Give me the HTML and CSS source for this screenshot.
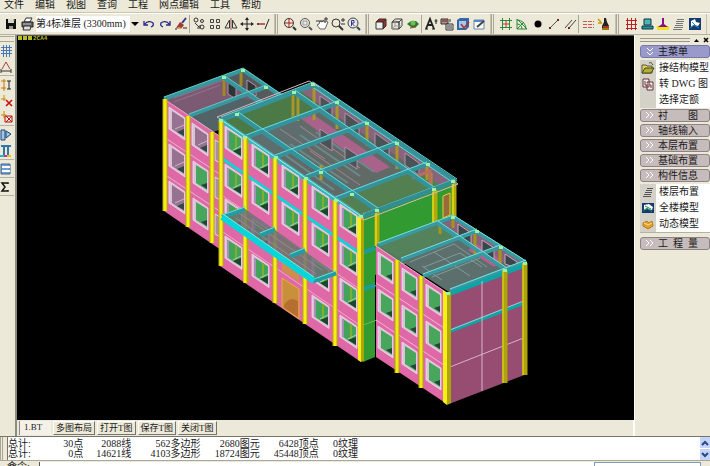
FILE: index.html
```html
<!DOCTYPE html>
<html lang="zh-CN">
<head>
<meta charset="utf-8">
<title>1.BT</title>
<link rel="stylesheet" href="styles.css">
</head>
<body>
<nav class="menubar">
  <a href="#">文件</a><a href="#">编辑</a><a href="#">视图</a><a href="#">查询</a><a href="#">工程</a><a href="#">网点编辑</a><a href="#">工具</a><a href="#">帮助</a>
</nav>

<div class="toolbar">
  <div class="group">
    <button class="tool"><svg viewBox="0 0 16 16"><path d="M3 3h10v10H3z" fill="#111"/><path d="M5 3h6v4H5z" fill="#d8d8c8"/><path d="M6 10h4v3H6z" fill="#999"/><path d="M11 3v2" stroke="#6a6"/></svg></button>
    <button class="tool"><svg viewBox="0 0 16 16"><path d="M5 6l2-4h6l-2 4z" fill="#fff" stroke="#333"/><path d="M3 6h11v5H3z" fill="#666" stroke="#222"/><path d="M5 10h7l-1 4H4z" fill="#ddd" stroke="#333"/><path d="M4 8h8" stroke="#bbb"/></svg></button>
    <div class="floor">
      <select class="floor-select" aria-label="标准层"><option>第4标准层 (3300mm)</option></select>
      <svg class="floor-arrow" viewBox="0 0 8 6"><path d="M0 1h8L4 5z" fill="#000"/></svg>
    </div>
    <button class="tool"><svg viewBox="0 0 16 16"><path d="M3 5v4h4M4 8c2-3 6-3 8-1 1 2 0 3-2 4" fill="none" stroke="#23238c" stroke-width="1.3"/></svg></button>
    <button class="tool"><svg viewBox="0 0 16 16"><path d="M13 5v4H9M12 8c-2-3-6-3-8-1-1 2 0 3 2 4" fill="none" stroke="#23238c" stroke-width="1.3"/></svg></button>
    <button class="tool"><svg viewBox="0 0 16 16"><path d="M13 2l-4 5" stroke="#338" stroke-width="2"/><path d="M7 6l4 3-3 4-5-1z" fill="#a23a3a"/><path d="M4 11l5 1-2 1z" fill="#e8d060"/><path d="M2 13h2M10 12h4" stroke="#222"/></svg></button>
    <span class="sep"></span>
    <button class="tool"><svg viewBox="0 0 16 16" fill="none" stroke="#333"><circle cx="5" cy="4" r="2"/><circle cx="11" cy="5" r="1.5"/><circle cx="11" cy="11" r="2"/><path d="M4 7l4 4M6 12h3v-3"/></svg></button>
    <button class="tool"><svg viewBox="0 0 16 16" fill="none" stroke="#444"><path d="M3.500 3.500h3v3h-3zM9.500 3.500h3v3h-3zM3.500 9.500h3v3h-3zM9.500 9.500h3v3h-3z"/></svg></button>
    <button class="tool"><svg viewBox="0 0 16 16" fill="none" stroke="#333"><path d="M6.500 4v8H2zM9.500 4v8H14z"/><path d="M8 2v12" stroke="#955"/></svg></button>
    <button class="tool"><svg viewBox="0 0 16 16"><path d="M8 3v10M3 8h10" stroke="#222"/><path d="M8 1l2 3H6zM8 15l2-3H6zM1 8l3-2v4zM15 8l-3-2v4z" fill="#222"/></svg></button>
    <button class="tool"><svg viewBox="0 0 16 16"><path d="M2 8h8" stroke="#a33" stroke-width="1.500"/><path d="M10 13l4-10M2 8h2" stroke="#222" fill="none"/></svg></button>
  </div>
  <div class="group">
    <button class="tool"><svg viewBox="0 0 16 16" fill="none" stroke="#333"><circle cx="7" cy="7" r="4.500"/><path d="M11 11l3 3" stroke-width="2"/><path d="M7 2v10M2 7h10" stroke="#a22"/></svg></button>
    <button class="tool"><svg viewBox="0 0 16 16" fill="none" stroke="#555"><circle cx="7" cy="7" r="4.500"/><path d="M11 11l3 3" stroke-width="2"/><path d="M5 5h4v4H5z" stroke="#99a"/></svg></button>
    <button class="tool"><svg viewBox="0 0 16 16"><path d="M3 9l3 4h5l3-7-2-1-1 2-1-3-2 2-2-1-1 3z" fill="#fff" stroke="#666"/><path d="M2 5h8M10 3h4M12 1v4" stroke="#333"/></svg></button>
    <button class="tool"><svg viewBox="0 0 16 16" fill="none" stroke="#333"><circle cx="6" cy="7" r="4"/><path d="M9 10l4 4" stroke-width="2"/><path d="M11 4h4M13 2v4M11 8h4"/></svg></button>
    <button class="tool"><svg viewBox="0 0 16 16" fill="none" stroke="#345"><circle cx="7" cy="7" r="5"/><path d="M11 11l3 3" stroke-width="2"/><path d="M5.500 10V4.500h2.500v2.500h-2.500l3 3" stroke="#33a"/></svg></button>
  </div>
  <div class="group">
    <button class="tool"><svg viewBox="0 0 16 16" stroke="#333"><path d="M3 6l3-3h7l-3 3z" fill="#a22"/><path d="M10 6l3-3v7l-3 3z" fill="#933"/><path d="M3 6h7v7H3z" fill="#eee"/></svg></button>
    <button class="tool"><svg viewBox="0 0 16 16" stroke="#444" fill="none"><path d="M3 6l3-3h7l-3 3zM10 6l3-3v7l-3 3zM3 6h7v7H3z"/><path d="M6 3v7H13M6 10l-3 3" stroke="#999"/></svg></button>
    <button class="tool"><svg viewBox="0 0 16 16"><path d="M2 8l4-3h5l3 3-3 3H6z" fill="#2b7a2b"/><circle cx="8" cy="7" r="2.500" fill="#6fbf55"/><path d="M5 12l6-1" stroke="#843"/></svg></button>
    <span class="sep"></span>
    <button class="tool"><svg viewBox="0 0 16 16" fill="none" stroke="#222"><path d="M3 13L7 3l4 10M5 9h4" stroke-width="1.800"/><path d="M2 13h3M9 13h3M13 3v5M11.500 5h3"/></svg></button>
    <button class="tool"><svg viewBox="0 0 16 16" stroke="#333"><path d="M2 3h7v5H2z" fill="#c88"/><path d="M7 8h7v6H7z" fill="#eee"/><path d="M3 5h5M8 10h5M8 12h5M11 3v3" fill="none"/></svg></button>
    <button class="tool"><svg viewBox="0 0 16 16"><path d="M2 4l3-2h9v9l-3 3H2z" fill="#3767a6"/><path d="M4 5h7v7H4z" fill="#a5c9e8"/><path d="M6 8l3 4 5-6" fill="none" stroke="#a33" stroke-width="1.500"/></svg></button>
    <button class="tool"><svg viewBox="0 0 16 16"><path d="M3 4h10v9H3z" fill="#fff" stroke="#68a"/><path d="M3 5h10" stroke="#58c" stroke-width="2"/><path d="M6 11l7-6" stroke="#444" stroke-width="2"/></svg></button>
  </div>
  <div class="group">
    <button class="tool"><svg viewBox="0 0 16 16" fill="none" stroke="#2b8a3b"><path d="M4.500 2v12M11.500 2v12M2 4.500h12M2 11.500h12"/><path d="M8 5v6M5 8h6" stroke="#c33"/></svg></button>
    <button class="tool"><svg viewBox="0 0 16 16" fill="none" stroke="#2b8a3b"><path d="M3 3v10h10M3 3l10 10M3 8c3 0 5 2 5 5M3 4c5 0 9 4 9 9M3 13l7-7"/></svg></button>
    <button class="tool"><svg viewBox="0 0 16 16"><circle cx="8" cy="8" r="3.500" fill="#000"/></svg></button>
    <button class="tool"><svg viewBox="0 0 16 16"><path d="M4 12l8-8" stroke="#555"/><path d="M3 11h2v2H3zM11 3h2v2h-2z" fill="#722"/></svg></button>
    <button class="tool"><svg viewBox="0 0 16 16"><path d="M3 12l7-8M7 12l7-8" stroke="#444"/><path d="M6 11h2v2H6z" fill="#722"/></svg></button>
    <span class="sep"></span>
    <button class="tool"><svg viewBox="0 0 16 16" stroke="#c55"><path d="M3 5.500h11M3 8.500h11M3 11.500h11" stroke-dasharray="4 1"/></svg></button>
    <button class="tool"><svg viewBox="0 0 16 16"><path d="M8 2h2l1 4 2 4v4H6v-4l2-4z" fill="#222"/><path d="M7 10h6v2H7z" fill="#a33"/><path d="M2 3l3 3M2 7h4M6 13h7" stroke="#c90" stroke-width="1.500"/></svg></button>
  </div>
  <div class="group">
    <button class="tool"><svg viewBox="0 0 16 16" stroke="#b22"><path d="M4.500 2v12M8.500 2v12M12.500 2v12M3 4.500h11M3 8.500h11M3 12.500h11"/></svg></button>
    <button class="tool"><svg viewBox="0 0 16 16" stroke="#134"><path d="M5 3h7v6H5z" fill="#4bb5b5"/><path d="M3 10h11v3H3z" fill="#299"/></svg></button>
    <button class="tool"><svg viewBox="0 0 16 16"><path d="M2 10h12v4H2z" fill="#f0e020"/><path d="M7 2h2v6l4 3H3l4-3z" fill="#818"/></svg></button>
    <button class="tool"><svg viewBox="0 0 16 16" stroke="#777"><path d="M6 3.500h7M5 5.500h8M5 7.500h7M4 9.500h8M3 11.500h9M2 13.500h9"/></svg></button>
    <button class="tool"><svg viewBox="0 0 16 16"><path d="M2 2h12v12H2z" fill="#153a72"/><path d="M4 5l4-2 1 3 4 1-2 3-4-1-3 2z" fill="#fff"/><path d="M3 12l4-3 5 3M5 6l5 5" fill="none" stroke="#28b"/></svg></button>
  </div>
</div>

<main class="workspace">
  <aside class="left-tools">
    <span class="hgrip"></span>
    <button class="side-tool"><svg viewBox="0 0 14 14" stroke="#4879b8"><path d="M3.500 1v12M6.500 1v12M9.500 1v12M1 3.500h11M1 6.500h11M1 9.500h11"/></svg></button>
    <button class="side-tool"><svg viewBox="0 0 14 14" fill="none"><path d="M2 9l4-7 4 7" stroke="#a44"/><path d="M1 11h10M1 9v4M11 9v4" stroke="#333"/></svg></button>
    <span class="hsep"></span>
    <button class="side-tool"><svg viewBox="0 0 14 14" fill="none"><path d="M1 3h5M1 10h5M4 1v12" stroke="#c70"/><path d="M7 3h4M7 11h4M9 3v8" stroke="#222"/></svg></button>
    <button class="side-tool"><svg viewBox="0 0 14 14" fill="none"><path d="M1 5h5M4 1v6" stroke="#c80"/><path d="M6 6l6 6M12 6l-6 6" stroke="#c11" stroke-width="1.600"/></svg></button>
    <button class="side-tool"><svg viewBox="0 0 14 14" fill="none"><path d="M1 5h5M4 1v7" stroke="#c80"/><path d="M5 6h7v6H5zM6 6l6 6M12 6l-6 6" stroke="#b11"/></svg></button>
    <span class="hsep"></span>
    <button class="side-tool"><svg viewBox="0 0 14 14"><path d="M1 2h4v10H1zM6 3l5 3-5 4z" fill="#9ec8ea" stroke="#247"/></svg></button>
    <button class="side-tool"><svg viewBox="0 0 14 14"><path d="M1 2h10M4 2v9M8 2v9" stroke="#37a" stroke-width="2"/><path d="M0 12h4" stroke="#2bb" stroke-width="2"/><path d="M4 12h3" stroke="#d2a" stroke-width="2"/><path d="M7 12h4" stroke="#dc0" stroke-width="2"/></svg></button>
    <span class="hsep"></span>
    <button class="side-tool"><svg viewBox="0 0 14 14"><path d="M1 2h9v10H1z" fill="#6f9ddb" stroke="#468"/><path d="M2 5h8M2 9h8" stroke="#fff" stroke-width="2"/></svg></button>
    <span class="hsep"></span>
    <button class="side-tool"><svg viewBox="0 0 14 14"><path d="M8 4V3H2l3 4-3 4h6v-1" fill="none" stroke="#111" stroke-width="1.500"/></svg></button>
    <span class="hsep"></span>
  </aside>

  <section class="drawing">
    <div class="viewport">
      <div class="view-label"><i></i><i></i><i></i>2CA4</div>
      <svg class="model" viewBox="17 36 617 384" preserveAspectRatio="xMidYMid meet">
        <defs>
          <g id="win">
            <path d="M0 0l17 11.500v22l-17-11.500z" fill="#d9c3d6"/>
            <path d="M3 4l13 8.500v18l-13-8.500z" fill="#43a35a"/>
            <path d="M3 4v18" stroke="#a78fb5" stroke-width="2"/>
            <path d="M11 9v18" stroke="#7db02c" stroke-width="2"/>
            <path d="M8 25l8-3v8z" fill="#1c4430"/>
            <path d="M8 24l8-4" stroke="#9fd6b0"/>
            <path d="M0 0l17 11.500v22l-17-11.500z" fill="none" stroke="#ecdcec" stroke-width=".8"/>
          </g>
          <g id="winl">
            <path d="M0 0l16 11v22l-16-11z" fill="#d9c3d6"/>
            <path d="M3 4l12 8v18l-12-8z" fill="#977290"/>
            <path d="M8 25l7-3v7z" fill="#2d4944"/>
            <path d="M6 22l9-4" stroke="#c9b5c9"/>
            <path d="M0 0l16 11v22l-16-11z" fill="none" stroke="#ecdcec" stroke-width=".8"/>
          </g>
          <g id="winr">
            <path d="M0 0l15 10v22l-15-10z" fill="#d9c3d6"/>
            <path d="M3 4l11 7v18l-11-7z" fill="#48a55c"/>
            <path d="M8 24l6-2v6z" fill="#24443a"/>
            <path d="M0 0l15 10v22l-15-10z" fill="none" stroke="#ecdcec" stroke-width=".8"/>
          </g>
        </defs>

        <!-- left wing -->
        <path d="M164 99l79-30 52 36-82 27z" fill="#7d5a73"/>
        <path d="M224 78l19-8 34 24-16 8z" fill="#565a5c"/>
        <path d="M190 117l50-20 28 8-55 27z" fill="#536266"/>
        <path d="M224 78v18M241 72v14" stroke="#a08822" stroke-width="3"/>
        <path d="M228 82l8 5v12l-8-5zM247 80l9 6v10l-9-6z" fill="#2c3436" stroke="#b68caa"/>
        <path d="M174 98l50-18M174 102l46-17" stroke="#a48ca2" stroke-width=".5"/>
        <g stroke="#38969c" stroke-width="4">
          <path d="M164 99l79-29 44 30M189 116l77-29M224 78l38 26" fill="none"/>
        </g>
        <g stroke="#62d2cf" stroke-width=".9" fill="none"><path d="M164 97l79-29 45 31M189 114l77-29M225 76l40 27"/></g>
        <path d="M164 99l57 38v113l-57-39z" fill="#df68a7"/>
        <path d="M164 99l57 38M164 137l57 38M164 174l57 38" stroke="#e8b6c9" fill="none"/>
        <use href="#winl" x="169" y="107"/><use href="#winl" x="169" y="144"/><use href="#winl" x="169" y="181"/>
        <use href="#winl" x="192" y="123"/><use href="#winr" x="193" y="161"/><use href="#winr" x="193" y="198"/>
        <path d="M215 140l5 3v20l-5-3zM215 177l5 3v20l-5-3zM215 214l5 3v20l-5-3z" fill="#a98bac" stroke="#ead7e8"/>
        <g stroke="#b5a90c" stroke-width="5"><path d="M165 99v112M188 116v111M212 132v111"/></g>
        <g stroke="#f5ee12" stroke-width="3"><path d="M165 99v112M188 116v111M212 132v111"/></g>

        <!-- main block -->
        <path d="M363 218l92-35v62l-80 30v82l-12 5z" fill="#319a31"/>
        <path d="M363 254l92-35M363 290l14-5M363 325l14-5" stroke="#7fbd6b" stroke-width=".8"/>
        <path d="M364 252l11-4M364 289l11-4" stroke="#1b9c98" stroke-width="4"/>
        <path d="M443 196l7-3v22l-7 3z" fill="#9b6a3c" stroke="#e0d22e"/>
        <path d="M220 119l93-35 144 98-94 36z" fill="#616a67"/>
        <path d="M222 119l91-34 28 17-94 35z" fill="#4b7a47"/>
        <path d="M249 138l46-18 31 18-49 19z" fill="#5e6e6f"/>
        <path d="M337 199l60-22 30-12 27 16-91 34z" fill="#547f50"/>
        <path d="M314 87l139 94-12 5-141-95z" fill="#8a637d"/>
        <path d="M300 118l14-3 76 52-14 6z" fill="#a9628a"/>
        <path d="M300 135l60 41M290 144l58 39M316 132l58 40M281 152l53 38" stroke="#6b8a8b" stroke-width="2"/>
        <path d="M280 129l45 30M300 126l60 42M310 151l50 34" stroke="#a7848f"/>
        <path d="M320 96l12 8v15l-12-8zM345 113l14 10v15l-14-10zM375 133l14 10v15l-14-10zM405 153l14 10v12l-14-10zM320 129l12 8v14l-12-8zM345 147l12 8v14l-12-8z" fill="#4a5355" stroke="#b58fae"/>
        <path d="M293 94v28M298 96v25M314 88v32M337 103v26M367 124v22M397 145v24M427 166v14M321 165v15M431 173v18" stroke="#a8962a" stroke-width="3"/>
        <path d="M412 178l18-7v14M437 170l9 6" stroke="#bc6c60" stroke-width="3" fill="none"/>
        <g fill="none" stroke="#35929a" stroke-width="5">
          <path d="M221 120l92-35 143 97"/>
          <path d="M246 137l94-35M275 157l92-34M306 177l91-34M335 199l92-35M363 216l92-35M237 114l140 96M294 92l139 97"/>
        </g>
        <g fill="none" stroke="#68dad7" stroke-width="1">
          <path d="M221 117l92-35 144 97M246 135l94-35M275 155l92-34M306 175l91-34M335 197l92-35M363 214l92-35M238 112l140 96M295 90l139 97"/>
          <path d="M314 88l141 96"/>
        </g>
        <path d="M220 120l141 97v145l-141-96z" fill="#df68a7"/>
        <path d="M220 194l141 96M220 230l141 96" stroke="#efa8c4"/>
        <path d="M220 120l141 97" stroke="#3bb4b9" stroke-width="5"/>
        <path d="M220 119l141 97" stroke="#a6efe9"/>
        <path d="M220 157l141 97" stroke="#12d3d6" stroke-width="3"/>
        <use href="#win" x="225" y="126"/><use href="#win" x="225" y="164"/><use href="#win" x="225" y="199"/><use href="#win" x="225" y="236"/>
        <use href="#win" x="252" y="144"/><use href="#win" x="252" y="181"/><use href="#win" x="252" y="218"/><use href="#win" x="252" y="254"/>
        <use href="#win" x="282" y="165"/><use href="#win" x="282" y="202"/><use href="#win" x="282" y="239"/>
        <use href="#win" x="312" y="186"/><use href="#win" x="312" y="223"/><use href="#win" x="312" y="258"/><use href="#win" x="312" y="295"/>
        <use href="#win" x="340" y="204"/><use href="#win" x="340" y="242"/><use href="#win" x="340" y="278"/><use href="#win" x="340" y="315"/>
        <path d="M282 278l17 11v30l-17-12z" fill="#c9903c" stroke="#f0a744"/>
        <path d="M284 305c4-6 8-8 14-4v16l-14-9z" fill="#b5702f"/>
        <path d="M282 238l17 11v33l-17-11z" fill="#cf8d50"/>
        <g stroke="#b5a90c" stroke-width="5"><path d="M221 120v146M246 138v145M275 158v145M305 179v145M335 200v146"/></g>
        <g stroke="#f7f013" stroke-width="3"><path d="M221 120v146M245 138v145M275 158v145M305 179v145M335 200v146"/></g>
        <path d="M357 216l4 2v144l-3-2z" fill="#f7f013"/><path d="M361 218l3-1v144l-3 1z" fill="#aca50b"/>
        <path d="M377 212v34M435 190v34M454 183v34" stroke="#b4a90a" stroke-width="5"/>
        <path d="M376 212v34M433 190v34M453 183v34" stroke="#e4db18" stroke-width="1.500"/>
        <path d="M217 117l92-36 10 6M217 117l6 4M357 216l7 4 94-36-4-3" fill="none" stroke="#d8b8c4"/>
        <path d="M365 215l90-34" stroke="#328e91" stroke-width="4"/>

        <!-- entrance canopy -->
        <path d="M222 217l23-8 91 64-23 9z" fill="#6c7073" fill-opacity=".85"/>
        <path d="M236 218l80 56M239 213l83 57" stroke="#9c8791"/>
        <path d="M222 217l23-8M260 235l15-6M290 256l15-6M313 281l23-8" stroke="#209ca2" stroke-width="5"/>
        <path d="M222 215l23-8M260 233l15-6M290 254l15-6M314 279l22-8" stroke="#76dcda"/>
        <path d="M222 217l92 64" stroke="#08d5da" stroke-width="6"/>
        <path d="M223 214l91 63" stroke="#75efeb"/>

        <!-- right wing -->
        <path d="M376 245l77-29 74 46-78 30z" fill="#5c6f6c"/>
        <path d="M378 245l58-22 20 13-57 22z" fill="#54825a"/>
        <path d="M455 218l68 44-12 5-68-43z" fill="#8a617c"/>
        <path d="M424 267l36-14 22 14M410 262l44-18 33 23M432 277l48-19M442 280l-20-14M470 276l-36-24" stroke="#7f9c9a" fill="none"/>
        <path d="M477 244l26 17-9 6-26-17z" fill="#bc5b8e"/>
        <path d="M458 224l13 9v12l-13-8zM482 240l12 8v13l-12-8zM505 254l12 8v6l-12-4z" fill="#3a4648" stroke="#c7a5be"/>
        <path d="M453 218v10M475 234v20M500 250v16M440 226v8" stroke="#a89417" stroke-width="3"/>
        <g fill="none" stroke="#389aa1" stroke-width="4"><path d="M378 245l75-28 73 46M401 260l76-29M423 276l77-29M437 223l68 46"/><path d="M450 291l76-29" stroke-width="5"/></g>
        <g fill="none" stroke="#79e0dd" stroke-width="1"><path d="M378 243l75-28 73 46M401 258l76-29M423 274l77-29M438 221l69 47M450 289l76-29"/></g>
        <path d="M376 246l71 47v111l-71-47z" fill="#df68a7"/>
        <path d="M376 246l71 47M376 283l71 47M376 320l71 47" stroke="#f0b8d0" fill="none"/>
        <use href="#winr" x="378" y="252"/><use href="#winr" x="378" y="289"/><use href="#winr" x="378" y="326"/>
        <use href="#winr" x="402" y="268"/><use href="#winr" x="402" y="305"/><use href="#winr" x="402" y="342"/>
        <use href="#winr" x="426" y="284"/><use href="#winr" x="426" y="321"/><use href="#winr" x="426" y="358"/>
        <path d="M449 293l78-30v111l-78 30z" fill="#974c72"/>
        <path d="M450 294l76-29M450 331l76-29" stroke="#0aa5a6" stroke-width="4"/>
        <path d="M450 330l76-30M450 367l76-30M482 281v110" stroke="#dfbfd0" stroke-width=".9"/>
        <g stroke="#ada40b" stroke-width="5"><path d="M397 260v113M421 276v112M505 270v113M525 263v112"/></g>
        <g stroke="#f2e914" stroke-width="3"><path d="M397 260v113M421 276v112"/></g>
        <path d="M503 270v113M523 263v112" stroke="#d4ca16" stroke-width="1.500"/>
        <path d="M443 290l4 3v112l-4-3z" fill="#f7f013"/><path d="M447 293l4-2v112l-4 2z" fill="#aca50b"/>
        <g fill="#9cf2a5"><path d="M241 69h4v3h-4zM222 76h4v3h-4zM264 86h4v3h-4zM219 119h4v3h-4zM235 113h4v3h-4zM292 91h4v3h-4zM311 83h4v3h-4zM335 101h4v3h-4zM365 122h4v3h-4zM395 142h4v3h-4zM426 163h4v3h-4zM451 180h4v3h-4zM375 209h4v3h-4zM350 193h4v3h-4zM319 171h4v3h-4zM243 136h4v3h-4zM274 156h4v3h-4zM304 177h4v3h-4zM334 199h4v3h-4zM359 215h4v3h-4zM432 188h4v3h-4zM451 216h4v3h-4zM475 230h4v3h-4zM499 246h4v3h-4zM523 262h4v3h-4zM503 269h4v3h-4zM446 292h4v3h-4z"/></g>
      </svg>
    </div>
    <div class="tabs">
      <span class="tab-current">1.BT</span>
      <button class="tab">多图布局</button><button class="tab">打开T图</button><button class="tab">保存T图</button><button class="tab">关闭T图</button>
    </div>
  </section>

  <aside class="panel">
    <div class="panel-top"><span class="bar"></span><svg class="panel-ctl" viewBox="0 0 20 8"><path d="M4 6h5L6.500 3z"/><path d="M14 2l4 4M18 2l-4 4" stroke="#000" stroke-width="1.500"/></svg></div>
    <button class="head head-main"><svg class="chev" viewBox="0 0 17 11"><path d="M6 2l3 3 3-3M6 6l3 3 3-3"/></svg>主菜单</button>
    <div class="items">
      <a href="#" class="item"><svg viewBox="0 0 14 14"><path d="M1 4h4l1 1h5v7H1z" fill="#e8d65a" stroke="#554"/><path d="M1 12l3-5h9l-3 5z" fill="#b7ae30" stroke="#442"/><path d="M8 2c2-1 3 0 4 2" fill="none" stroke="#252"/></svg><span>接结构模型</span></a>
      <a href="#" class="item"><svg viewBox="0 0 14 14" fill="#eee" stroke="#633"><path d="M2 2h6v8H2zM6 5h6v8H6z"/><path d="M4 4v4h3M8 8h2v3"/></svg><span>转 DWG 图</span></a>
      <a href="#" class="item"><svg viewBox="0 0 14 14"></svg><span>选择定额</span></a>
    </div>
    <button class="head"><svg class="chev" viewBox="0 0 17 11"><path d="M5 2l3 3-3 3M9 2l3 3-3 3"/></svg>衬　　图</button>
    <button class="head"><svg class="chev" viewBox="0 0 17 11"><path d="M5 2l3 3-3 3M9 2l3 3-3 3"/></svg>轴线输入</button>
    <button class="head"><svg class="chev" viewBox="0 0 17 11"><path d="M5 2l3 3-3 3M9 2l3 3-3 3"/></svg>本层布置</button>
    <button class="head"><svg class="chev" viewBox="0 0 17 11"><path d="M5 2l3 3-3 3M9 2l3 3-3 3"/></svg>基础布置</button>
    <button class="head"><svg class="chev" viewBox="0 0 17 11"><path d="M5 2l3 3-3 3M9 2l3 3-3 3"/></svg>构件信息</button>
    <div class="items items-last">
      <a href="#" class="item"><svg viewBox="0 0 14 14" stroke="#555"><path d="M6 3.500h6M5 5.500h6M4 7.500h7M3 9.500h7M2 11.500h8"/></svg><span>楼层布置</span></a>
      <a href="#" class="item"><svg viewBox="0 0 14 14"><path d="M1 2h12v10H1z" fill="#123b72"/><path d="M3 4l5-1 4 3-1 3-5-1-3 1z" fill="#fff"/><path d="M2 10l4-3 5 4M4 5l6 3" fill="none" stroke="#2a8a50"/></svg><span>全楼模型</span></a>
      <a href="#" class="item"><svg viewBox="0 0 14 14"><path d="M2 6l4-2 2 2 3-2 1 5-5 3-5-3z" fill="#e2a02c" stroke="#b87918"/><path d="M3 6l4 2 4-2" fill="none" stroke="#ffe08a"/></svg><span>动态模型</span></a>
    </div>
    <button class="head"><svg class="chev" viewBox="0 0 17 11"><path d="M5 2l3 3-3 3M9 2l3 3-3 3"/></svg>工  程  量</button>
  </aside>
</main>

<section class="console">
  <span class="vgrip"></span>
  <table class="log">
    <tr><td>总计:</td><td>30点</td><td>2088线</td><td>562多边形</td><td>2680图元</td><td>6428顶点</td><td>0纹理</td></tr>
    <tr><td>总计:</td><td>0点</td><td>14621线</td><td>4103多边形</td><td>18724图元</td><td>45448顶点</td><td>0纹理</td></tr>
  </table>
  <div class="scroll">
    <button class="scroll-btn"><svg viewBox="0 0 10 10"><path d="M2 7l3-3 3 3" fill="none" stroke="#26478f" stroke-width="2"/></svg></button>
    <button class="scroll-btn"><svg viewBox="0 0 10 10"><path d="M2 3l3 3 3-3" fill="none" stroke="#26478f" stroke-width="2"/></svg></button>
  </div>
</section>
<div class="command">
  <label for="cmd">命令:</label>
  <input id="cmd" type="text">
  <span class="hint"></span>
</div>
</body>
</html>
```
FILE: styles.css
```css
* { box-sizing: border-box; }

body {
  margin: 0;
  height: 100vh;
  overflow: hidden;
  display: flex;
  flex-direction: column;
  background: #ece9d8;
  color: #1a1a1a;
  font: 10px/12px "Liberation Serif", "Noto Sans CJK SC", serif;
}

button, select, input {
  font: inherit;
  color: inherit;
  margin: 0;
  padding: 0;
  border: 0;
  background: none;
}

a { color: inherit; text-decoration: none; }

.menubar {
  display: flex;
  flex: none;
  gap: 11px;
  height: 13px;
  padding-left: 4px;
  line-height: 10px;
  white-space: nowrap;
  border-bottom: 1px solid #c9c6b6;
}

.toolbar {
  display: flex;
  flex: none;
  height: 22px;
  border-top: 1px solid #fff;
  border-bottom: 1px solid #b5b2a4;
}

.group {
  display: flex;
  flex: none;
  align-items: center;
  padding-right: 3px;
  border-right: 1px solid #c4c1b2;
}

.group:first-child {
  padding-left: 3px;
}

.group + .group {
  padding-left: 4px;
  border-left: 3px double #a9a698;
}

.tool { width: 16px; height: 16px; }
.tool svg { display: block; width: 16px; height: 16px; }

.sep {
  width: 1px;
  height: 18px;
  margin-right: 1px;
  background: #a9a698;
}

.floor {
  position: relative;
  width: 105px;
  margin-left: 1px;
}

.floor-select {
  display: block;
  width: 94px;
  height: 16px;
  appearance: none;
  background: #fff;
  white-space: nowrap;
}

.floor-arrow {
  position: absolute;
  right: 2px;
  top: 5px;
  width: 8px;
  height: 6px;
  pointer-events: none;
}

.workspace {
  display: flex;
  flex: 1;
  min-height: 0;
}

.left-tools {
  display: flex;
  flex-direction: column;
  flex: none;
  width: 15px;
}

.hgrip {
  height: 6px;
  margin: 1px 1px 0 0;
  border-top: 1px solid #a9a698;
  border-bottom: 1px solid #a9a698;
}

.hsep {
  height: 1px;
  margin: 1px 1px 0 0;
  background: #b5b2a4;
}

.side-tool { height: 16px; padding-top: 1px; }
.side-tool svg { display: block; width: 14px; height: 14px; }

.drawing {
  display: flex;
  flex: 1;
  flex-direction: column;
  min-width: 0;
  border-left: 2px solid #8e8b80;
}

.viewport {
  position: relative;
  flex: 1;
  min-height: 0;
  background: #000;
  border-top: 1px solid #55534c;
}

.model { display: block; width: 100%; height: 100%; }

.view-label {
  position: absolute;
  left: 1px;
  top: 0;
  display: flex;
  gap: 1px;
  color: #b9bc2a;
  font: bold 6px/6px "Liberation Mono", monospace;
}

.view-label i { width: 4px; height: 4px; background: #b9bc2a; }

.tabs {
  display: flex;
  flex: none;
  height: 16px;
  padding: 1px 0 1px 2px;
  gap: 2px;
  font-size: 9px;
  border-right: 1px solid #fff;
}

.tab-current {
  width: 32px;
  padding-left: 4px;
  border-left: 1px solid #888;
  background: #f4f2e8;
}

.tab {
  padding: 0 2px;
  line-height: 11px;
  border: 1px solid;
  border-color: #fff #77756b #77756b #fff;
}

.panel {
  flex: none;
  width: 76px;
  padding-left: 5px;
  border-left: 1px solid #fff;
}

.panel-top {
  display: flex;
  align-items: center;
  height: 9px;
}

.bar {
  flex: 1;
  height: 4px;
  border-top: 1px solid #99968a;
  border-bottom: 1px solid #99968a;
}

.panel-ctl { width: 20px; height: 8px; }

.head {
  display: flex;
  align-items: center;
  width: 100%;
  height: 13px;
  margin: 1px 0 2px;
  border: 1px solid #8d8284;
  border-radius: 3px;
  background: #c7bcbc;
  line-height: 11px;
  white-space: pre;
}

.head-main { background: #9999cc; border-color: #7777a8; }

.chev {
  flex: none;
  width: 17px;
  height: 11px;
  fill: none;
  stroke: #fff;
}

.items { background: linear-gradient(to right, #d4d2c8 16px, #fff 16px); }
.items-last { margin-bottom: 4px; border-bottom: 1px solid #b5b2a4; }

.item {
  display: flex;
  align-items: center;
  gap: 4px;
  height: 16px;
  padding-left: 1px;
  white-space: nowrap;
}

.item svg { flex: none; width: 14px; height: 14px; }

.console {
  display: flex;
  flex: none;
  height: 25px;
  border-top: 1px solid #77756b;
  border-bottom: 1px solid #aaa89c;
  background: #fff;
}

.vgrip {
  width: 8px;
  background: #ece9d8;
  border-right: 1px solid #77756b;
  border-left: 3px double #a9a698;
}

.log {
  align-self: flex-start;
  margin-top: 2px;
  border-collapse: collapse;
  table-layout: fixed;
  width: 350px;
  line-height: 10px;
  white-space: nowrap;
}

.log td { width: 59px; height: 10px; padding: 0; text-align: right; }
.log td:first-child { width: 25px; text-align: left; }
.log td:nth-child(2) { width: 50px; }
.log td:nth-child(3) { width: 48px; }
.log td:nth-child(4) { width: 69px; }
.log td:nth-child(7) { width: 39px; }

.scroll {
  display: flex;
  flex-direction: column;
  gap: 1px;
  width: 10px;
  margin-left: auto;
}

.scroll-btn { flex: 1; background: #c6d5f7; }
.scroll-btn svg { display: block; width: 10px; height: 10px; }

.command {
  display: flex;
  flex: none;
  height: 5px;
  overflow: hidden;
  padding: 1px 9px 0 7px;
}

.command label { width: 32px; line-height: 10px; }
.command input { flex: 1; min-width: 0; background: #fff; border-left: 1px solid #555; }

.hint {
  width: 107px;
  background: #fff;
  border: 1px solid #7f9db9;
  border-bottom: 0;
}
```
